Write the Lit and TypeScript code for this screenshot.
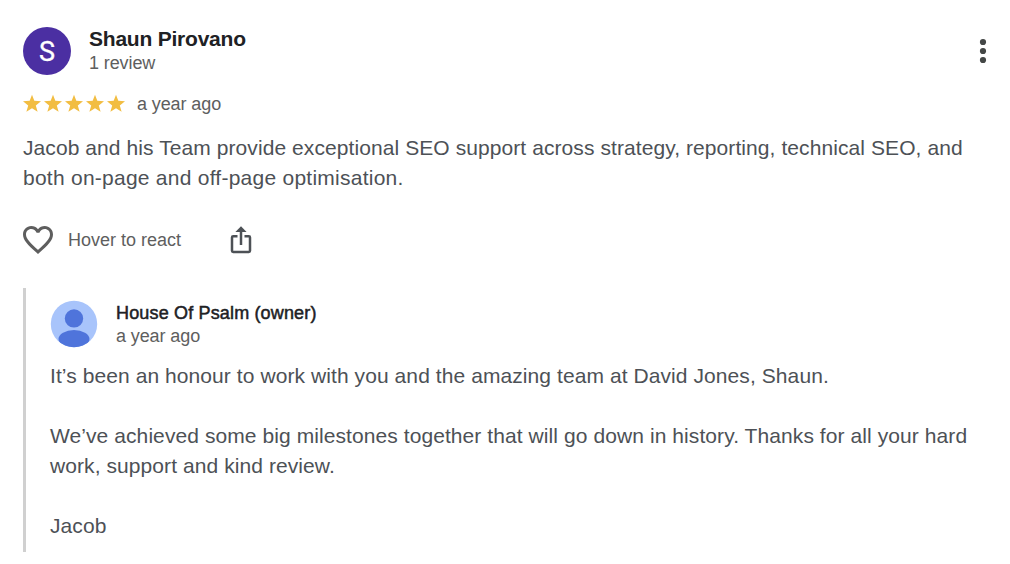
import { LitElement, html, css, svg } from 'lit';
import { customElement, property } from 'lit/decorators.js';

@customElement('star-rating')
class StarRating extends LitElement {
  @property({ type: Number }) value = 5;

  static styles = css`
    :host {
      display: flex;
    }

    svg {
      display: block;
      width: 21px;
      height: 21px;
      fill: #f2bd42;
    }
  `;

  render() {
    return html`${Array.from({ length: this.value }, () => html`
      <svg viewBox="0 0 21 21">
        <path d="M9 .8l2.3 6 6.7.5-5.2 4.1 1.8 6.4L9 14.2l-5.600 3.600 1.800-6.400L0 7.300l6.700-.5z" />
      </svg>
    `)}`;
  }
}

@customElement('owner-reply')
class OwnerReply extends LitElement {
  @property() name = '';
  @property() date = '';

  static styles = css`
    :host {
      display: block;
      box-sizing: border-box;
      height: 264px;
      border-left: 3px solid #d0d0d0;
      padding: 12px 0 0 24px;
    }

    .header {
      display: flex;
      gap: 18px;
      height: 61px;
    }

    .avatar {
      display: block;
      width: 48px;
      height: 48px;
    }

    .name {
      margin-top: 1px;
      font-size: 18px;
      line-height: 24px;
      letter-spacing: 0.16px;
      color: #202124;
      -webkit-text-stroke: 0.5px #202124;
    }

    .date {
      font-size: 18px;
      line-height: 22px;
      letter-spacing: -0.1px;
      color: #5e5e5e;
    }

    .text {
      font-size: 21px;
      line-height: 30px;
      letter-spacing: 0.08px;
      color: #4d5156;
    }
  `;

  render() {
    return html`
      <div class="header">
        <svg class="avatar" viewBox="0 0 48 48">
          <defs>
            <clipPath id="disc"><circle cx="24" cy="24" r="23.2" /></clipPath>
          </defs>
          <circle cx="24" cy="24" r="23.2" fill="#a8c4fb" />
          <g clip-path="url(#disc)" fill="#4f74db">
            <circle cx="24" cy="18.4" r="9.2" />
            <ellipse cx="24" cy="39" rx="15.5" ry="8.9" />
          </g>
        </svg>
        <div>
          <div class="name">${this.name}</div>
          <div class="date">${this.date}</div>
        </div>
      </div>
      <div class="text"><slot></slot></div>
    `;
  }
}

@customElement('app-root')
class AppRoot extends LitElement {
  static styles = css`
    :host {
      display: block;
      box-sizing: border-box;
      width: 1010px;
      height: 564px;
      padding: 27px 17px 0 23px;
      overflow: hidden;
      background: #fff;
      color: #5e5e5e;
      font-family: 'Liberation Sans', Arial, sans-serif;
      font-size: 18px;
    }

    svg {
      display: block;
    }

    .header {
      display: flex;
      height: 66px;
    }

    .avatar {
      width: 48px;
      height: 48px;
      margin-right: 18px;
      border-radius: 50%;
      background: #4b2fa2;
      color: #fff;
      font-family: Roboto, sans-serif;
      font-size: 27px;
      line-height: 50px;
      text-align: center;
      -webkit-text-stroke: 0.3px #fff;
    }

    .author {
      flex: 1;
    }

    .name {
      font-size: 21px;
      font-weight: bold;
      line-height: 24px;
      letter-spacing: -0.22px;
      color: #202124;
    }

    .count {
      line-height: 24px;
      letter-spacing: -0.1px;
    }

    .more {
      width: 20px;
      height: 48px;
      fill: #444746;
    }

    .rating {
      display: flex;
      align-items: center;
      gap: 9px;
      height: 22px;
      letter-spacing: -0.1px;
    }

    .review {
      margin-top: 18px;
      height: 90px;
      font-size: 21px;
      line-height: 30px;
      letter-spacing: 0.08px;
      color: #4d5156;
    }

    .last {
      letter-spacing: 0.25px;
    }

    .actions {
      display: flex;
      align-items: center;
      height: 34px;
    }

    .heart {
      width: 30px;
      height: 28px;
      margin-right: 15px;
    }

    .hover {
      width: 162px;
    }

    .share {
      width: 22px;
      height: 28px;
    }

    owner-reply {
      margin-top: 31px;
    }
  `;

  render() {
    return html`
      <div class="header">
        <div class="avatar">S</div>
        <div class="author">
          <div class="name">Shaun Pirovano</div>
          <div class="count">1 review</div>
        </div>
        <svg class="more" viewBox="0 0 20 48">
          ${[15, 24, 33].map((y) => svg`<circle cx="10" cy=${y} r="3.1" />`)}
        </svg>
      </div>

      <div class="rating">
        <star-rating .value=${5}></star-rating>
        <span>a year ago</span>
      </div>

      <div class="review">
        Jacob and his Team provide exceptional SEO support across strategy, reporting, technical SEO, and<br />
        <span class="last">both on-page and off-page optimisation.</span>
      </div>

      <div class="actions">
        <svg class="heart" viewBox="2 3 20 18.35" fill="#5e5e5e" preserveAspectRatio="none">
          <path d="M16.5 3c-1.74 0-3.41.81-4.5 2.09C10.91 3.81 9.24 3 7.5 3 4.42 3 2 5.42 2 8.5c0 3.78 3.4 6.86 8.55 11.54L12 21.35l1.45-1.32C18.6 15.36 22 12.28 22 8.5 22 5.42 19.58 3 16.5 3zm-4.4 15.55l-.1.1-.1-.1C7.14 14.24 4 11.39 4 8.5 4 6.5 5.5 5 7.5 5c1.54 0 3.04.99 3.57 2.36h1.87C13.46 5.99 14.96 5 16.5 5c2 0 3.5 1.5 3.5 3.5 0 2.89-3.14 5.74-7.9 10.05z" />
        </svg>
        <span class="hover">Hover to react</span>
        <svg class="share" viewBox="0 0 22 28" fill="none" stroke="#4d5156" stroke-width="2.5">
          <path d="M7.5 10.2H3.2q-1.2 0-1.2 1.2v13.3q0 1.2 1.2 1.2h15.6q1.2 0 1.2-1.2V11.400q0-1.200-1.200-1.200h-4.300" />
          <path d="M11 19V3" />
          <path d="M11 .3l5.600 5.700H5.400z" fill="#4d5156" stroke="none" />
        </svg>
      </div>

      <owner-reply name="House Of Psalm (owner)" date="a year ago"
        >It’s been an honour to work with you and the amazing team at David Jones, Shaun.<br /><br />We’ve achieved some big milestones together that will go down in history. Thanks for all your hard<br />work, support and kind review.<br /><br />Jacob</owner-reply
      >
    `;
  }
}
